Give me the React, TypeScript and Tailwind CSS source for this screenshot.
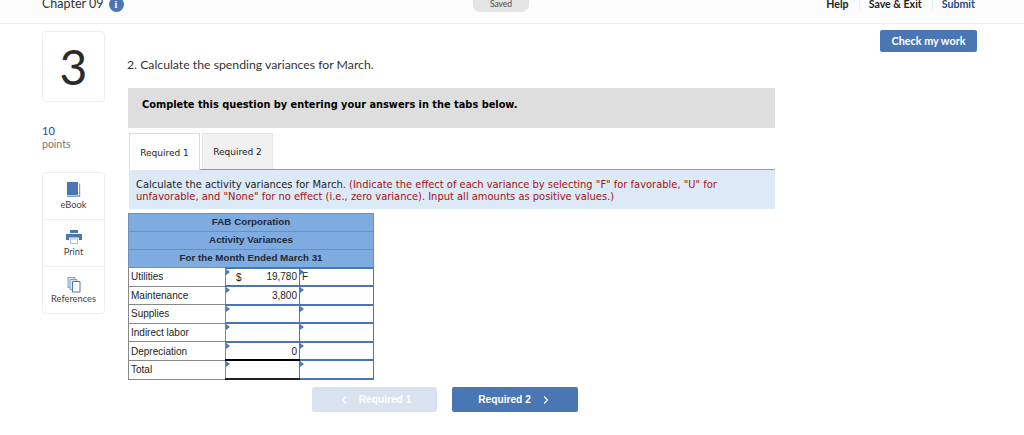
import { ChevronLeft, ChevronRight } from "lucide-react";

const LATO = "font-['Lato','Open_Sans',sans-serif]";

const rows = [
  { label: "Utilities", dollar: true, amount: "19,780", mark: "F" },
  { label: "Maintenance", amount: "3,800" },
  { label: "Supplies" },
  { label: "Indirect labor" },
  { label: "Depreciation", amount: "0", rule: true },
  { label: "Total", total: true },
];

const Flag = () => (
  <span className="absolute left-0 top-0 w-0 h-0 border-y-[3px] border-y-transparent border-l-[4px] border-l-[#4a7ab8]" />
);

const Header = () => (
  <header className={`h-[24px] bg-[#fcfcfc] border-b border-[#eeeeee] relative ${LATO}`}>
    <div className="flex items-center h-[8px] pl-[42px] pr-[49px] justify-between">
      <div className="flex items-center gap-[5px] w-[300px]">
        <span className="text-[12.5px] leading-[14px] text-[#333333]">Chapter 09</span>
        <span className="w-[15px] h-[15px] rounded-full bg-[#4a76b4] text-white text-[10px] font-bold flex items-center justify-center font-['Liberation_Serif',serif]">
          i
        </span>
      </div>
      <span className="absolute left-[473px] top-0 w-[56px] h-[12px] rounded-b-[7px] bg-[#e4e4e6] text-[8.5px] leading-[8px] text-[#444444] text-center">
        Saved
      </span>
      <nav className="flex items-center text-[10.6px] font-bold">
        <span className="text-[#222222] pr-[10px] border-r border-[#eeeeee] h-[12px] leading-[12px]">Help</span>
        <span className="text-[#222222] pl-[9px] pr-[10px] border-r border-[#eeeeee] h-[12px] leading-[12px]">Save &amp; Exit</span>
        <span className="text-[#1f4a8c] pl-[9px] h-[12px] leading-[12px]">Submit</span>
      </nav>
    </div>
  </header>
);

const BookIcon = () => (
  <svg width="15" height="16" viewBox="0 0 15 16" className="block">
    <path d="M1 0h11v13H1z" fill="#4a76b4" />
    <path d="M1 13.5h12V1.5h1.2V15H1z" fill="#7f9fcb" />
  </svg>
);

const PrintIcon = () => (
  <svg width="16" height="14" viewBox="0 0 16 14" className="block">
    <path d="M4 0h8v3H4z" fill="#4a76b4" />
    <path d="M0 4h16v6h-3V7.5H3V10H0z" fill="#4a76b4" />
    <path d="M4 8.5h8V14H4z" fill="#a9bfdc" />
    <path d="M5 9.5h6V13H5z" fill="#fff" />
  </svg>
);

const RefIcon = () => (
  <svg width="14" height="16" viewBox="0 0 14 16" className="block">
    <path d="M1 .5h7v10H1z" fill="#dfe7f2" stroke="#7f9fcb" />
    <path d="M3 2.5h7v10H3z" fill="#dfe7f2" stroke="#7f9fcb" />
    <path d="M5.5 4.5h7.5v10.5H5.5z" fill="#fff" stroke="#4a76b4" />
  </svg>
);

const Sidebar = () => (
  <aside className={`w-[63px] shrink-0 ${LATO}`}>
    <div className="h-[71px] border border-[#eeeeee] rounded-[4px] flex items-center justify-center text-[48px] leading-none text-[#2b2b2b]">
      3
    </div>
    <p className="mt-[22px] text-[11px] leading-[14px] text-[#1f4a8c]">10</p>
    <p className="text-[10.5px] leading-[13px] text-[#777777]">points</p>
    <div className="mt-[21px] h-[142px] border border-[#eeeeee] rounded-[4px] flex flex-col text-[9.3px] text-[#444444]">
      <div className="h-[47px] flex flex-col items-center pt-[9px] gap-[1px] border-b border-[#eeeeee]">
        <BookIcon />
        <span className="leading-[11px]">eBook</span>
      </div>
      <div className="h-[47px] flex flex-col items-center pt-[10px] gap-[2px] border-b border-[#eeeeee]">
        <PrintIcon />
        <span className="leading-[11px]">Print</span>
      </div>
      <div className="flex-1 flex flex-col items-center pt-[10px]">
        <RefIcon />
        <span className="leading-[11px]">References</span>
      </div>
    </div>
  </aside>
);

const VarianceTable = () => (
  <table className="mt-[4px] -ml-[1px] w-[245px] table-fixed border-collapse font-['Liberation_Sans',Arial,sans-serif] text-[10px] text-[#222222]">
    <colgroup>
      <col className="w-[97px]" />
      <col className="w-[74px]" />
      <col className="w-[74px]" />
    </colgroup>
    <thead>
      {["FAB Corporation", "Activity Variances", "For the Month Ended March 31"].map((t) => (
        <tr key={t} className="h-[18px]">
          <th colSpan={3} className="bg-[#7eabe0] border border-[#6f8fb5] p-0 text-center font-bold text-[9.8px] text-[#1f2937]">
            {t}
          </th>
        </tr>
      ))}
    </thead>
    <tbody>
      {rows.map((r) => (
        <tr key={r.label} className="h-[18.6px]">
          <td className="border border-[#888888] pl-[2px] p-0">{r.label}</td>
          <td
            className={`relative p-0 pr-[2px] text-right border-x border-[#4a76b4] ${
              r.total
                ? "border-t-2 border-t-black border-b-2 border-b-[#222222]"
                : r.rule
                  ? "border-t-2 border-t-[#4a76b4] border-b-2 border-b-black"
                  : "border-y-2 border-y-[#4a76b4]"
            }`}
          >
            <Flag />
            {r.dollar && <span className="absolute left-[10px] top-[1px]">$</span>}
            {r.amount}
          </td>
          <td className="relative p-0 pl-[2px] border-x border-[#4a76b4] border-y-2 border-y-[#4a76b4]">
            <Flag />
            {r.mark}
          </td>
        </tr>
      ))}
    </tbody>
  </table>
);

const Question = () => (
  <main className="w-[647px] ml-[23px] shrink-0">
    <p className={`mt-[27px] -ml-[1px] text-[12.25px] leading-[14px] text-[#333333] ${LATO}`}>
      2. Calculate the spending variances for March.
    </p>
    <div className="mt-[16px] h-[40px] bg-[#dedede] pl-[14px] flex items-center font-['DejaVu_Sans',Verdana,sans-serif] text-[9.8px] font-bold text-black pb-[5px]">
      Complete this question by entering your answers in the tabs below.
    </div>
    <div className="mt-[5px] pl-[1px] font-['DejaVu_Sans',Verdana,sans-serif]">
      <div className="flex gap-[2px] h-[37px] border-b border-[#999999] text-[9px] text-[#222222]">
        <span className="w-[71px] h-[37px] pt-[3px] bg-white border border-b-0 border-[#dddddd] flex items-center justify-center">Required 1</span>
        <span className="w-[71px] h-[36px] pt-[3px] bg-[#f1f1f1] border border-b-0 border-[#e6e6e6] flex items-center justify-center">Required 2</span>
      </div>
      <div className="h-[39px] bg-[#dceaf8] pl-[7px] pt-[9px] text-[9.93px] leading-[12px] text-[#222222]">
        Calculate the activity variances for March.{" "}
        <span className="text-[#a81010]">
          (Indicate the effect of each variance by selecting "F" for favorable, "U" for
          <br />
          unfavorable, and "None" for no effect (i.e., zero variance). Input all amounts as positive values.)
        </span>
      </div>
      <VarianceTable />
      <div className="mt-[7px] flex gap-[15px] pl-[183px] font-['Liberation_Sans',Arial,sans-serif] text-[10.2px] font-bold text-white">
        <button className="w-[125px] h-[25px] bg-[#d9e3f0] rounded-[2px] flex items-center justify-center gap-[9px]">
          <ChevronLeft size={12} strokeWidth={2.5} />
          Required 1
        </button>
        <button className="w-[126px] h-[25px] bg-[#4a76b4] rounded-[2px] flex items-center justify-center gap-[9px]">
          Required 2
          <ChevronRight size={12} strokeWidth={2.5} />
        </button>
      </div>
    </div>
  </main>
);

const App = () => (
  <div className="w-[1024px] h-[435px] bg-white overflow-hidden">
    <Header />
    <div className="flex items-start pl-[42px] pt-[7px]">
      <Sidebar />
      <Question />
      <button className={`ml-[105px] -mt-[1px] w-[97px] h-[22px] bg-[#4a76b4] rounded-[2px] text-white text-[10.8px] font-bold ${LATO}`}>
        Check my work
      </button>
    </div>
  </div>
);

export default App;
